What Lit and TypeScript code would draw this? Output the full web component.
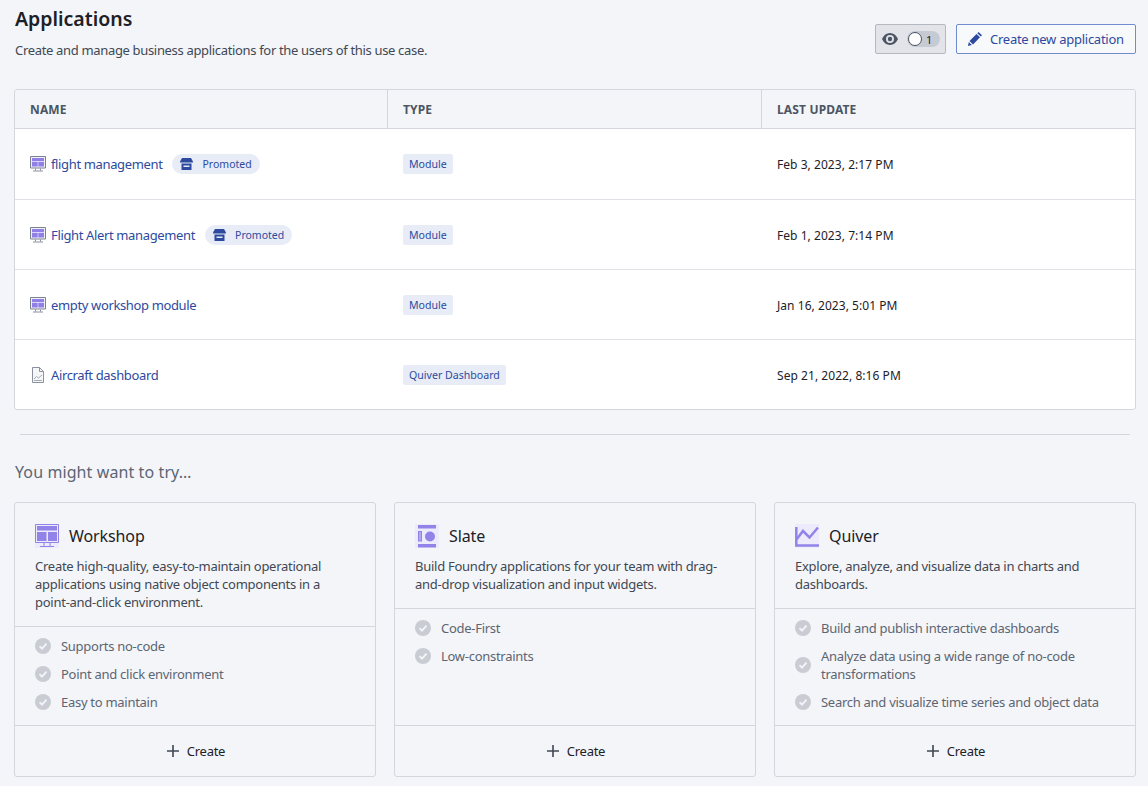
import { LitElement, html, css } from 'lit';
import { customElement } from 'lit/decorators.js';

const workshopIcon = html`
  <svg width="24" height="24" viewBox="0 0 24 24">
    <rect width="24" height="24" fill="#eceafb"></rect>
    <path d="M.5.500h23v18H.5z" fill="none" stroke="#9283e8"></path>
    <path d="M2 2h20v4.500H2zM2 8h9.500v9H2zM13 8h9v9H13z" fill="#9283e8"></path>
    <path d="M9 19v3M15 19v3M5 22.500h14" fill="none" stroke="#9283e8"></path>
  </svg>`;

const smallWorkshop = html`
  <svg width="16" height="16" viewBox="0 0 16 16">
    <path d="M.5.500h15v11.500H.5z" fill="#f2f1fa" stroke="#7b828e"></path>
    <path d="M2 2h12v3H2zM2 5.800h5.700V10.500H2zM8.300 5.800H14V10.500H8.300z" fill="#8f7fe6"></path>
    <path d="M5.500 12.500v2M10.500 12.500v2M3 15h10" fill="none" stroke="#8a919e"></path>
  </svg>`;

const dashIcon = html`
  <svg width="16" height="16" viewBox="0 0 16 16" fill="none" stroke="#8a919e">
    <path d="M2.500.500h7l4 4v11h-11z" fill="#f5f6f8"></path>
    <path d="M9.500.500v4h4"></path>
    <path d="M4 12l2.500-2.500 2 1.500L12 8M4 13.500h8" stroke="#a4aab5"></path>
  </svg>`;

const shopIcon = html`
  <svg width="13" height="12" viewBox="0 0 13 12" fill="#2d4a9e">
    <path d="M2 0h9l2 3.500v1H0v-1z"></path>
    <path d="M1.500 5.500h10V12h-10zM3.500 7.500V9h6V7.500z" fill-rule="evenodd"></path>
  </svg>`;

const checkIcon = html`
  <svg width="16" height="16" viewBox="0 0 16 16">
    <circle cx="8" cy="8" r="8" fill="#c9ccd3"></circle>
    <path d="M4.500 8.200l2.500 2.500 4.500-5" fill="none" stroke="#f4f5f8" stroke-width="1.800"></path>
  </svg>`;

const slateIcon = html`
  <svg width="24" height="24" viewBox="0 0 24 24">
    <rect width="24" height="24" fill="#eceafb"></rect>
    <path d="M3 1h18v3.500H3zM3 20h18v3.500H3zM3 7h4v10.500H3z" fill="#9283e8"></path>
    <path d="M4 8h2v8.500H4z" fill="#b3a8ef"></path>
    <circle cx="15" cy="12.500" r="5" fill="#9283e8"></circle>
  </svg>`;

const quiverIcon = html`
  <svg width="24" height="24" viewBox="0 0 24 24" fill="none" stroke="#9283e8" stroke-width="2.500">
    <rect width="24" height="24" fill="#eceafb" stroke="none"></rect>
    <path d="M1.300 3v18.500H24"></path>
    <path d="M1.500 15.500L8 7l6.500 6.500L23 3.500"></path>
  </svg>`;

const apps = [
  { name: 'flight management', type: 'Module', date: 'Feb 3, 2023, 2:17 PM', promoted: true, icon: smallWorkshop },
  { name: 'Flight Alert management', type: 'Module', date: 'Feb 1, 2023, 7:14 PM', promoted: true, icon: smallWorkshop },
  { name: 'empty workshop module', type: 'Module', date: 'Jan 16, 2023, 5:01 PM', promoted: false, icon: smallWorkshop },
  { name: 'Aircraft dashboard', type: 'Quiver Dashboard', date: 'Sep 21, 2022, 8:16 PM', promoted: false, icon: dashIcon },
];

const cards = [
  {
    title: 'Workshop',
    icon: workshopIcon,
    text: 'Create high-quality, easy-to-maintain operational applications using native object components in a point-and-click environment.',
    items: ['Supports no-code', 'Point and click environment', 'Easy to maintain'],
  },
  {
    title: 'Slate',
    icon: slateIcon,
    text: 'Build Foundry applications for your team with drag-and-drop visualization and input widgets.',
    items: ['Code-First', 'Low-constraints'],
  },
  {
    title: 'Quiver',
    icon: quiverIcon,
    text: 'Explore, analyze, and visualize data in charts and dashboards.',
    items: [
      'Build and publish interactive dashboards',
      'Analyze data using a wide range of no-code transformations',
      'Search and visualize time series and object data',
    ],
  },
];

@customElement('app-root')
export class AppRoot extends LitElement {
  static styles = css`
    :host {
      display: block;
      height: 786px;
      overflow: hidden;
      background: #f4f5f8;
      font-family: 'Noto Sans', sans-serif;
      font-size: 13px;
      letter-spacing: -0.27px;
      color: #1c2127;
    }

    .page {
      padding: 6px 12px 0 14px;
    }

    .head {
      display: flex;
      justify-content: space-between;
      align-items: flex-start;
      height: 83px;
    }

    h1 {
      margin: 0 0 0 1px;
      font-size: 19.5px;
      line-height: 26px;
      font-weight: 600;
      letter-spacing: 0;
    }

    .sub {
      margin-top: 9px;
      margin-left: 1px;
      line-height: 18px;
      letter-spacing: -0.33px;
      color: #404854;
    }

    .actions {
      display: flex;
      gap: 10px;
      margin-top: 18px;
    }

    .toggle {
      box-sizing: border-box;
      width: 71px;
      height: 30px;
      display: flex;
      align-items: center;
      gap: 9px;
      padding-left: 6px;
      background: #e2e4e9;
      border: 1px solid #b4b8c0;
      border-radius: 2px;
    }

    .pill {
      width: 33px;
      height: 16px;
      display: flex;
      align-items: center;
      gap: 4px;
      background: #c5cad3;
      border-radius: 8px;
      font-size: 11px;
      letter-spacing: 0;
      color: #1c2127;
    }

    .knob {
      box-sizing: border-box;
      width: 14px;
      height: 14px;
      margin-left: 1px;
      background: #fff;
      border: 1px solid #4b5563;
      border-radius: 50%;
    }

    .create-app {
      box-sizing: border-box;
      width: 180px;
      height: 30px;
      display: flex;
      align-items: center;
      gap: 8px;
      padding-left: 11px;
      background: #f8f9fb;
      border: 1px solid #6f8cce;
      border-radius: 2px;
      letter-spacing: -0.26px;
      color: #2d4a9e;
    }

    .table {
      background: #fff;
      border: 1px solid #d3d6dc;
      border-radius: 3px;
      overflow: hidden;
    }

    .row {
      box-sizing: border-box;
      display: grid;
      grid-template-columns: 373px 374px 1fr;
      align-items: center;
      height: 70px;
      border-top: 1px solid #dfe1e6;
    }

    .row.header + .row {
      border-top: none;
    }

    .row.header {
      height: 39px;
      border-top: none;
      border-bottom: 1px solid #d3d6dc;
      background: #f4f5f8;
      align-items: stretch;
      font-size: 12px;
      font-weight: 700;
      letter-spacing: 0.15px;
      color: #4b5563;
    }

    .row.header > div {
      display: flex;
      align-items: center;
      border-right: 1px solid #d3d6dc;
    }

    .row.header > div:last-child {
      border-right: none;
    }

    .cell {
      padding-left: 15px;
    }

    .name {
      display: flex;
      align-items: center;
      gap: 5px;
      letter-spacing: -0.36px;
      color: #2d4a9e;
    }

    .name svg {
      flex: none;
    }

    .promoted {
      display: flex;
      align-items: center;
      gap: 9px;
      height: 20px;
      margin-left: 5px;
      padding: 0 8px;
      background: #e7ecf7;
      border-radius: 10px;
      font-size: 10.5px;
      letter-spacing: 0;
    }

    .tag {
      display: inline-block;
      padding: 0 6px;
      line-height: 20px;
      background: #e7ecf7;
      border-radius: 2px;
      font-size: 10.6px;
      letter-spacing: 0;
      color: #2d4a9e;
    }

    .date {
      padding-top: 1px;
      font-size: 12px;
      letter-spacing: 0.05px;
    }

    hr {
      margin: 24px 6px 0 6px;
      border: none;
      border-top: 1px solid #d3d6dc;
    }

    .try {
      margin-top: 25px;
      margin-left: 1px;
      font-size: 16px;
      line-height: 24px;
      letter-spacing: 0.1px;
      color: #5c6573;
    }

    .cards {
      display: grid;
      grid-template-columns: repeat(3, 362px);
      gap: 18px;
      margin-top: 18px;
    }

    .card {
      box-sizing: border-box;
      height: 275px;
      display: flex;
      flex-direction: column;
      border: 1px solid #d3d6dc;
      border-radius: 3px;
    }

    .top {
      padding: 21px 35px 15px 20px;
      border-bottom: 1px solid #d3d6dc;
    }

    .title {
      display: flex;
      align-items: center;
      gap: 10px;
      height: 24px;
      font-size: 16px;
      letter-spacing: -0.1px;
    }

    .text {
      margin-top: 9px;
      line-height: 18px;
      letter-spacing: -0.26px;
      color: #404854;
    }

    ul {
      flex: 1;
      display: flex;
      flex-direction: column;
      gap: 10px;
      margin: 0;
      padding: 10px 15px 0 20px;
      list-style: none;
      letter-spacing: -0.28px;
      color: #5c6573;
    }

    li {
      display: flex;
      align-items: center;
      gap: 10px;
      line-height: 18px;
    }

    li svg {
      flex: none;
    }

    .create {
      height: 50px;
      display: flex;
      align-items: center;
      justify-content: center;
      gap: 8px;
      padding-left: 2px;
      border-top: 1px solid #d3d6dc;
    }
  `;

  render() {
    return html`
      <div class="page">
        <div class="head">
          <div>
            <h1>Applications</h1>
            <div class="sub">Create and manage business applications for the users of this use case.</div>
          </div>
          <div class="actions">
            <div class="toggle">
              <svg width="16" height="12" viewBox="0 0 16 12" fill="#4b5563">
                <path d="M8 0C4.500 0 1.700 2.200 0 6c1.700 3.800 4.500 6 8 6s6.300-2.200 8-6c-1.700-3.800-4.500-6-8-6zm0 10a4 4 0 110-8 4 4 0 010 8z"></path>
                <circle cx="8" cy="6" r="2.200"></circle>
              </svg>
              <div class="pill"><span class="knob"></span>1</div>
            </div>
            <div class="create-app">
              <svg width="14" height="14" viewBox="0 0 14 14" fill="#2d4a9e">
                <path d="M10.500 0L14 3.200 12.800 4.500 9.300 1.200zM8.500 2l3.500 3.300L5 12.500 1.500 9zM.8 10l3 3L0 14z"></path>
              </svg>
              Create new application
            </div>
          </div>
        </div>

        <div class="table">
          <div class="row header">
            <div class="cell">NAME</div>
            <div class="cell">TYPE</div>
            <div class="cell">LAST UPDATE</div>
          </div>
          ${apps.map(
            (a) => html`
              <div class="row">
                <div class="cell name">
                  ${a.icon}
                  <span>${a.name}</span>
                  ${a.promoted ? html`<span class="promoted">${shopIcon}Promoted</span>` : ''}
                </div>
                <div class="cell"><span class="tag">${a.type}</span></div>
                <div class="cell date">${a.date}</div>
              </div>
            `
          )}
        </div>

        <hr />
        <div class="try">You might want to try…</div>

        <div class="cards">
          ${cards.map(
            (c) => html`
              <div class="card">
                <div class="top">
                  <div class="title">${c.icon}<span>${c.title}</span></div>
                  <div class="text">${c.text}</div>
                </div>
                <ul>
                  ${c.items.map((i) => html`<li>${checkIcon}<span>${i}</span></li>`)}
                </ul>
                <div class="create">
                  <svg width="12" height="12" viewBox="0 0 12 12" fill="#404854">
                    <path d="M5.200 0h1.600v5.200H12v1.600H6.800V12H5.200V6.800H0V5.200h5.200z"></path>
                  </svg>
                  Create
                </div>
              </div>
            `
          )}
        </div>
      </div>
    `;
  }
}
